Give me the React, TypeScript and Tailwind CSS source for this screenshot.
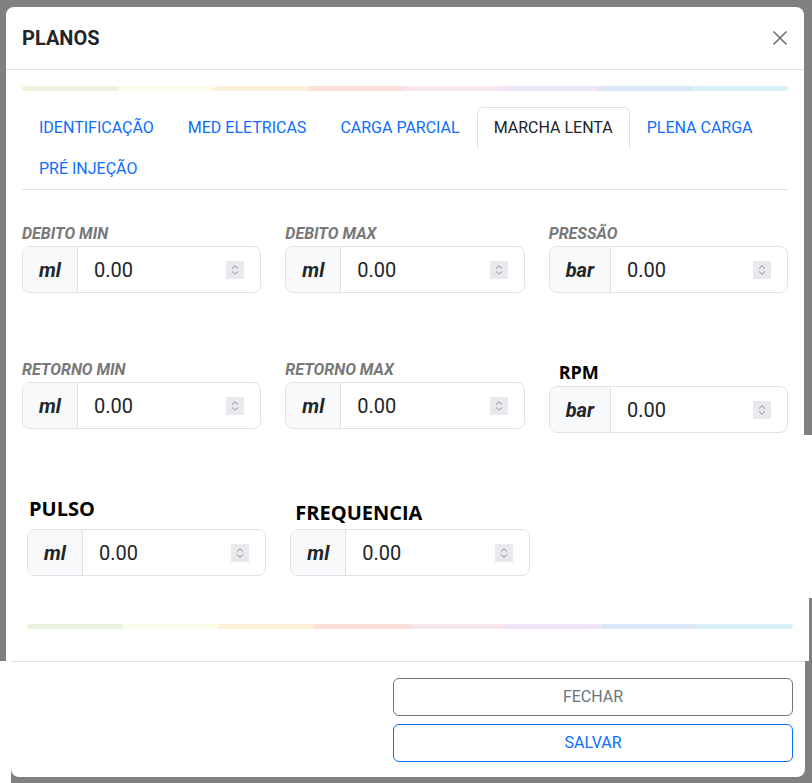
import React from "react";

const RAINBOW = [
  "bg-[#ebf4de]",
  "bg-[#fbfbea]",
  "bg-[#fdf0d8]",
  "bg-[#fbdfdb]",
  "bg-[#f8e5ee]",
  "bg-[#efe6f6]",
  "bg-[#dce6f6]",
  "bg-[#d9f1f8]",
];

function Rainbow() {
  return (
    <div className="flex h-[5px] w-[766px] overflow-hidden rounded-full">
      {RAINBOW.map((c) => (
        <div key={c} className={`flex-1 ${c}`} />
      ))}
    </div>
  );
}

function Spinner() {
  return (
    <svg width="18" height="18" viewBox="0 0 18 18" className="shrink-0">
      <rect x="0" y="0" width="18" height="18" fill="#e9e9ed" />
      <path d="M6 7.5 L9 4.8 L12 7.5" fill="none" stroke="#8d8d96" strokeWidth="1" />
      <path d="M6 10.5 L9 13.2 L12 10.5" fill="none" stroke="#8d8d96" strokeWidth="1" />
    </svg>
  );
}

function InputGroup({ unit }: { unit: string }) {
  return (
    <div className="flex h-[47px] overflow-hidden rounded-lg border border-[#dee2e6] bg-white">
      <div className="flex items-center border-r border-[#dee2e6] bg-[#f8f9fa] px-4 text-[20px] font-bold italic text-[#212529]">
        {unit}
      </div>
      <div className="flex flex-1 items-center px-4 text-[20px] text-[#212529]">
        <span className="flex-1">0.00</span>
        <Spinner />
      </div>
    </div>
  );
}

function Field({ label, unit }: { label: string; unit: string }) {
  return (
    <div className="flex flex-col">
      <div className="mb-[3px] text-[16px] font-bold italic uppercase leading-[18px] text-[#787878]">
        {label}
      </div>
      <InputGroup unit={unit} />
    </div>
  );
}

const TABS = [
  "IDENTIFICAÇÃO",
  "MED ELETRICAS",
  "CARGA PARCIAL",
  "MARCHA LENTA",
  "PLENA CARGA",
  "PRÉ INJEÇÃO",
];

export default function App() {
  return (
    <div className="flex h-[783px] w-[812px] flex-col overflow-hidden bg-[#808080] pt-[7px] font-[Roboto,sans-serif]">
      {/* top part of modal */}
      <div className="ml-[6px] w-[798px] rounded-t-lg bg-white">
        <div className="flex h-[63px] items-center justify-between border-b border-[#dee2e6] px-4">
          <div className="text-[20px] font-bold leading-[30px] text-[#212529]">PLANOS</div>
          <svg width="16" height="16" viewBox="0 0 16 16">
            <path d="M1.5 1.5 L14.5 14.5 M14.5 1.5 L1.5 14.5" stroke="#6e6e6e" strokeWidth="1.6" fill="none" />
          </svg>
        </div>
        <div className="px-4 pb-[2px] pt-4">
          <Rainbow />
          <div className="mt-4 flex w-[766px] flex-wrap border-b border-[#dee2e6]">
            {TABS.map((t) => {
              const active = t === "MARCHA LENTA";
              return (
                <div
                  key={t}
                  className={
                    active
                      ? "-mb-px rounded-t-md border border-[#dee2e6] border-b-white bg-white px-4 py-2 text-[16px] leading-6 text-[#212529]"
                      : "-mb-px rounded-t-md border border-transparent px-4 py-2 text-[16px] leading-6 text-[#0d6efd]"
                  }
                >
                  {t}
                </div>
              );
            })}
          </div>
          <div className="mt-[35px] grid w-[766px] grid-cols-3 items-start gap-x-6">
            <Field label="DEBITO MIN" unit="ml" />
            <Field label="DEBITO MAX" unit="ml" />
            <Field label="PRESSÃO" unit="bar" />
          </div>
          <div className="mt-[68px] grid w-[766px] grid-cols-3 items-start gap-x-6">
            <Field label="RETORNO MIN" unit="ml" />
            <Field label="RETORNO MAX" unit="ml" />
            <div className="flex flex-col">
              <div className="mb-[3px] pl-[10px] font-['Open_Sans',sans-serif] text-[18px] font-bold leading-[22px] text-black">
                RPM
              </div>
              <InputGroup unit="bar" />
            </div>
          </div>
        </div>
      </div>

      {/* middle part */}
      <div className="ml-[6px] w-[806px] bg-white pb-[22px] pl-[21px] pt-[62px]">
        <div className="grid w-[766px] grid-cols-3 items-end gap-x-6">
          <div className="flex flex-col">
            <div className="mb-[8px] pl-[2px] font-['Open_Sans',sans-serif] text-[20px] font-bold leading-[24px] text-black">
              PULSO
            </div>
            <InputGroup unit="ml" />
          </div>
          <div className="flex flex-col">
            <div className="mb-[4px] pl-[5px] font-['Open_Sans',sans-serif] text-[20px] font-bold leading-[24px] text-black">
              FREQUENCIA
            </div>
            <InputGroup unit="ml" />
          </div>
        </div>
      </div>

      {/* lower part */}
      <div className="ml-[6px] h-[63px] w-[803px] bg-white pl-[21px] pt-[26px]">
        <Rainbow />
      </div>

      {/* footer */}
      <div className="flex flex-1 items-start">
        <div className="h-full w-[11px] bg-white" />
        <div className="flex h-[116px] w-[794px] flex-col items-end gap-2 rounded-b-lg border-t border-[#dee2e6] bg-white pr-3 pt-4">
          <div className="flex h-[38px] w-[400px] items-center justify-center rounded-md border border-[#6c757d] text-[16px] text-[#6c757d]">
            FECHAR
          </div>
          <div className="flex h-[38px] w-[400px] items-center justify-center rounded-md border border-[#0d6efd] text-[16px] text-[#0d6efd]">
            SALVAR
          </div>
        </div>
      </div>
    </div>
  );
}
